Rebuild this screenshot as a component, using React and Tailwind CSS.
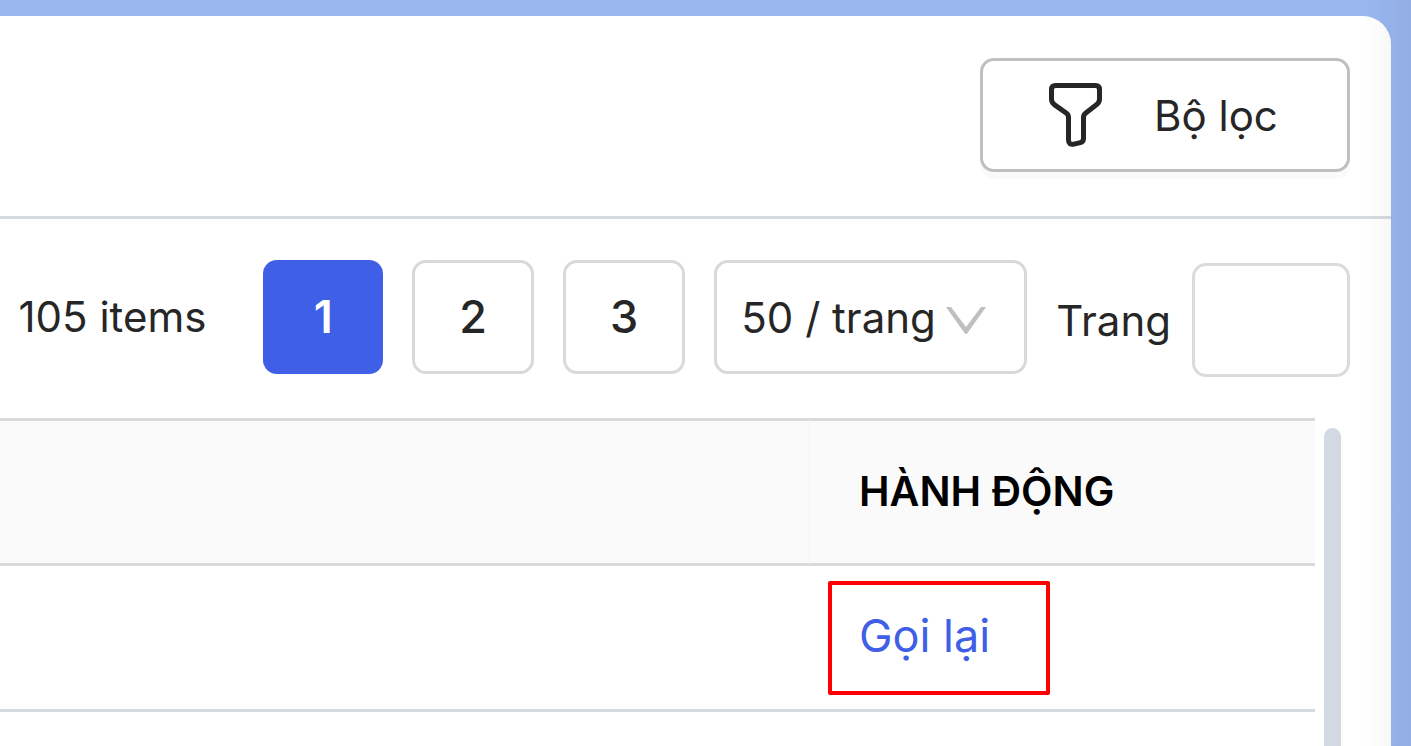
import { useState } from 'react'

const PAGES = [1, 2, 3]
const PAGE_SIZES = [10, 20, 50, 100]

function FilterIcon() {
  return (
    <svg
      className="h-16 w-[54px] shrink-0"
      viewBox="0 0 54 64"
      fill="none"
      stroke="currentColor"
      strokeWidth={5}
      strokeLinejoin="round"
      aria-hidden="true"
    >
      <path d="M6.5 2.5H46.5Q50.5 2.5 50.5 6.5V16Q50.5 19.5 47.7 21.6L36.8 30Q34.500 31.700 34.500 34.500V55.500Q34.500 58.800 31.300 59.600L25 61.100Q19.500 62.200 19.500 57V34.500Q19.500 31.700 17.200 30L5.300 21.600Q2.500 19.500 2.500 16V6.500Q2.500 2.500 6.500 2.500Z" />
    </svg>
  )
}

function PageButton({ page, active, onClick }) {
  return (
    <button
      type="button"
      onClick={onClick}
      aria-current={active ? 'page' : undefined}
      className={
        active
          ? 'h-[114px] min-w-[120px] rounded-[14px] bg-[#3f5fe6] text-[45px] font-semibold text-white'
          : 'h-[114px] min-w-[120px] rounded-[14px] border-3 border-[#d9d9d9] bg-white px-11 text-[45px] font-medium'
      }
    >
      {page}
    </button>
  )
}

function Pagination() {
  const [page, setPage] = useState(1)
  const [pageSize, setPageSize] = useState(50)
  const [jump, setJump] = useState('')

  return (
    <div className="flex items-start justify-end gap-[29px] pt-[41px] pr-[41px] pb-[41px] whitespace-nowrap">
      <span className="mr-7 leading-[114px]">105 items</span>
      {PAGES.map((n) => (
        <PageButton key={n} page={n} active={n === page} onClick={() => setPage(n)} />
      ))}
      <div className="grid items-center">
        <select
          aria-label="Số dòng mỗi trang"
          value={pageSize}
          onChange={(event) => setPageSize(Number(event.target.value))}
          className="col-start-1 row-start-1 h-[114px] w-[313px] appearance-none rounded-[14px] border-3 border-[#d9d9d9] bg-white pl-6"
        >
          {PAGE_SIZES.map((size) => (
            <option key={size} value={size}>
              {size} / trang
            </option>
          ))}
        </select>
        <svg
          className="pointer-events-none col-start-1 row-start-1 mt-2 mr-[41px] h-7 w-10 justify-self-end"
          viewBox="0 0 40 28"
          fill="#bfbfbf"
          aria-hidden="true"
        >
          <path d="M0 0H5L20 20L35 0H40L21.5 26Q20 28 18.5 26Z" />
        </svg>
      </div>
      <div className="flex items-center gap-[21px] pt-[3px]">
        <label htmlFor="jump-page">Trang</label>
        <input
          id="jump-page"
          type="text"
          value={jump}
          onChange={(event) => setJump(event.target.value)}
          className="h-[114px] w-[158px] rounded-[14px] border-3 border-[#d9dcdf] bg-white px-6"
        />
      </div>
    </div>
  )
}

function ActionTable() {
  return (
    <div className="flex flex-1 items-stretch">
      <div className="flex-1">
        <table className="w-full border-separate border-spacing-0 text-left">
          <thead>
            <tr className="h-[148px] bg-[#fafafa]">
              <th className="border-y-3 border-[#d9d9d9]" aria-label="Thông tin" />
              <th className="w-[506px] border-y-3 border-l border-y-[#d9d9d9] border-l-[#f2f2f2] pl-[49px] text-[41px] font-semibold text-black">
                HÀNH ĐỘNG
              </th>
            </tr>
          </thead>
          <tbody>
            <tr className="h-[146px]">
              <td className="border-b-3 border-[#d6dbdf]" />
              <td className="border-b-3 border-[#d6dbdf] pl-[19px]">
                <a
                  href="#call-back"
                  className="flex h-[114px] w-[222px] items-center rounded-xs border-4 border-[#ff0000] pb-1 pl-[27px] text-[45px] text-[#3f5fe6]"
                >
                  Gọi lại
                </a>
              </td>
            </tr>
          </tbody>
        </table>
      </div>
      <div className="mt-[10px] mr-[50px] ml-[9px] w-[17px] rounded-t-full bg-[#d2d9e3]" />
    </div>
  )
}

export default function App() {
  return (
    <div className="relative flex min-h-screen overflow-hidden bg-[#99b6ef] pt-4 pr-5 font-['Inter','Noto_Sans',sans-serif] text-[42px] text-[#262626]">
      <main className="flex min-w-0 flex-1 flex-col rounded-tr-[28px] bg-white">
        <header className="flex justify-end border-b-3 border-[#d6dbdf] pt-[42px] pr-[41px] pb-11">
          <button
            type="button"
            className="flex h-[114px] w-[370px] items-center gap-[51px] rounded-[14px] border-3 border-[#bfbfbf] bg-white pl-[66px] whitespace-nowrap shadow-[0_7px_0_rgba(0,0,0,0.02)]"
          >
            <FilterIcon />
            Bộ lọc
          </button>
        </header>
        <Pagination />
        <ActionTable />
      </main>
      <div className="pointer-events-none absolute inset-y-0 right-0 w-12 bg-linear-to-l from-black/5 to-transparent" />
    </div>
  )
}
